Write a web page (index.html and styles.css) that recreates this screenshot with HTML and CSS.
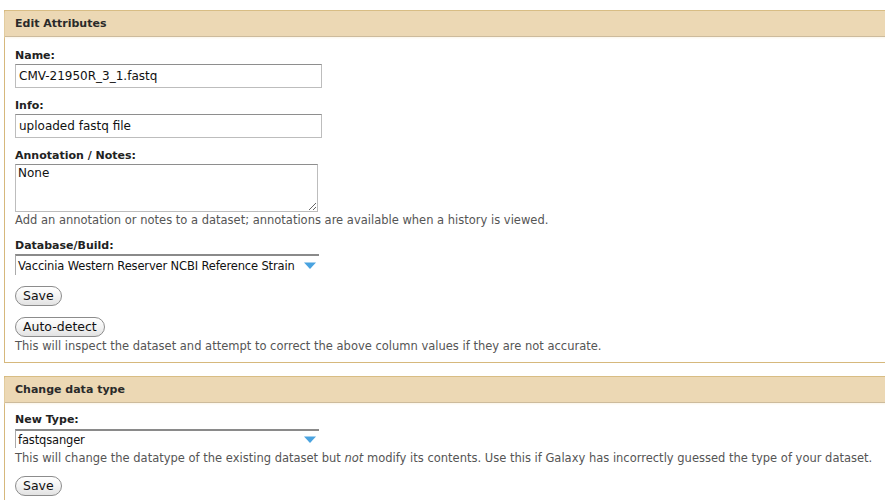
FILE: index.html
```html
<!DOCTYPE html>
<html>
<head>
<meta charset="utf-8">
<link rel="stylesheet" href="styles.css">
</head>
<body>
<div class="panel">
  <div class="panel-head">Edit Attributes</div>
  <div class="panel-body first-body">
    <div class="row">
      <div class="label">Name:</div>
      <input class="text" type="text" value="CMV-21950R_3_1.fastq">
    </div>
    <div class="row">
      <div class="label">Info:</div>
      <input class="text" type="text" value="uploaded fastq file">
    </div>
    <div class="row row-notes">
      <div class="label">Annotation / Notes:</div>
      <textarea class="area">None</textarea>
      <div class="help help-notes">Add an annotation or notes to a dataset; annotations are available when a history is viewed.</div>
    </div>
    <div class="row">
      <div class="label">Database/Build:</div>
      <div class="select"><span class="sel-text">Vaccinia Western Reserver NCBI Reference Strain</span><svg class="arrow" width="12" height="8" viewBox="0 0 12 8"><polygon points="0,0.5 12,0.5 6,7" fill="#4aa3e0"/></svg></div>
    </div>
    <div class="row btn-row"><button class="btn">Save</button></div>
    <div class="row btn-row2">
      <button class="btn">Auto-detect</button>
      <div class="help">This will inspect the dataset and attempt to correct the above column values if they are not accurate.</div>
    </div>
  </div>
</div>
<div class="panel second">
  <div class="panel-head">Change data type</div>
  <div class="panel-body second-body">
    <div class="row">
      <div class="label">New Type:</div>
      <div class="select short"><span class="sel-text">fastqsanger</span><svg class="arrow" width="12" height="8" viewBox="0 0 12 8"><polygon points="0,0.5 12,0.5 6,7" fill="#4aa3e0"/></svg></div>
      <div class="help help-type">This will change the datatype of the existing dataset but <em>not</em> modify its contents. Use this if Galaxy has incorrectly guessed the type of your dataset.</div>
    </div>
    <div class="row btn-row-last"><button class="btn">Save</button></div>
  </div>
</div>
</body>
</html>
```
FILE: styles.css
```css
html, body {
  margin: 0;
  padding: 0;
  background: #fff;
  overflow: hidden;
}
body {
  padding: 10px 0 0 4px;
  font-family: "DejaVu Sans", Verdana, sans-serif;
  font-size: 11.5px;
  color: #222;
}
.panel {
  width: 900px;
  border: 1px solid #d6b87c;
  border-right: none;
  background: #fff;
}
.panel.second {
  margin-top: 13px;
}
.panel-head {
  height: 25px;
  line-height: 25px;
  background: #ecd8b4;
  border-bottom: 1px solid #cdbb9c;
  padding-left: 10px;
  font-weight: bold;
  font-size: 11px;
  color: #2a2a2a;
  box-shadow: 0 1px 2px #fbf5e8;
}
.panel-body {
  padding: 11px 10px 8px 10px;
}
.second-body {
  padding-top: 9px;
  padding-bottom: 6px;
}
.row {
  margin-bottom: 10px;
}
.row-notes {
  margin-bottom: 10px;
}
.label {
  font-weight: bold;
  font-size: 11px;
  line-height: 15px;
  margin-bottom: 1px;
  color: #222;
}
.text {
  display: block;
  box-sizing: border-box;
  width: 307px;
  height: 24px;
  margin: 0;
  padding: 2px 3px;
  border: 1px solid #bdbdbd;
  border-top-color: #8e8e8e;
  font-family: "DejaVu Sans", Verdana, sans-serif;
  font-size: 12px;
  color: #111;
  background: #fff;
}
.area {
  display: block;
  box-sizing: border-box;
  width: 303px;
  height: 48px;
  margin: 0;
  padding: 1px 2px;
  border: 1px solid #bdbdbd;
  border-top-color: #8e8e8e;
  font-family: "DejaVu Sans", Verdana, sans-serif;
  font-size: 12px;
  color: #111;
  resize: both;
}
.help {
  color: #555;
  line-height: 15px;
  white-space: nowrap;
}
.help-notes {
  margin-top: 1px;
}
.btn-row2 .help {
  margin-top: 2px;
}
.help-type {
  margin-top: 3px;
}
.help em {
  font-style: italic;
}
.select {
  display: flex;
  align-items: center;
  justify-content: space-between;
  box-sizing: border-box;
  width: 304px;
  height: 21px;
  padding: 0 3px 0 2px;
  border-top: 2px solid #8a8a8a;
  border-left: 1px solid #aaa;
  background: #fff;
  color: #111;
  white-space: nowrap;
}
.sel-text {
  letter-spacing: -0.15px;
}
.select.short {
  height: 19px;
  margin-top: 2px;
}
.arrow {
  display: block;
  flex: none;
}
.btn {
  display: block;
  margin: 0;
  padding: 0 7px;
  height: 20px;
  border: 1px solid #8c8c8c;
  border-radius: 10px;
  background: linear-gradient(#ffffff, #f3f3f3 50%, #e2e2e2);
  font-family: "DejaVu Sans", Verdana, sans-serif;
  font-size: 12.5px;
  line-height: 18px;
  color: #111;
}
.btn-row {
  margin-top: 11px;
  margin-bottom: 11px;
}
.btn-row2 {
  margin-bottom: 0;
}
.btn-row-last {
  margin-top: 10px;
  margin-bottom: 0;
}
```
